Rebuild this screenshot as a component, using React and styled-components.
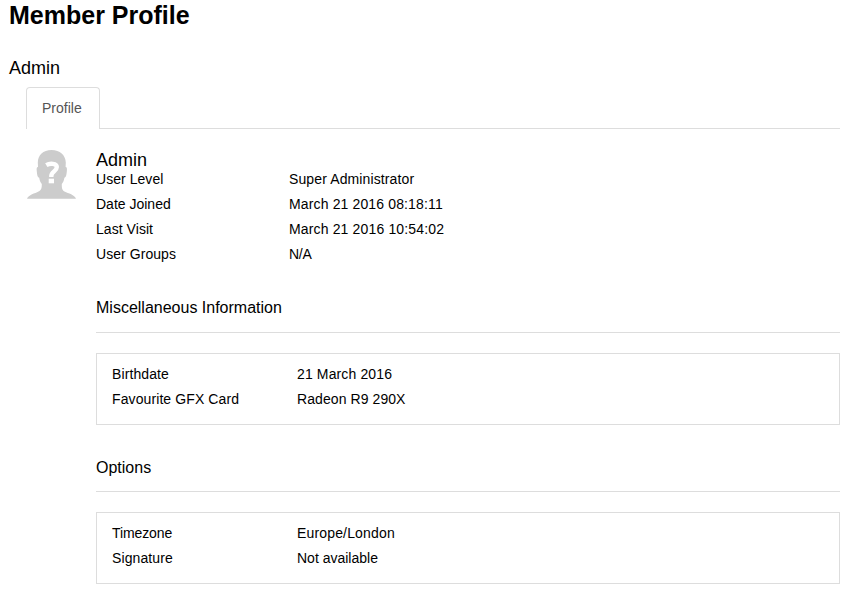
import React from "react";
import styled, { createGlobalStyle } from "styled-components";

const Global = createGlobalStyle`
  * { box-sizing: border-box; }
  body {
    margin: 0;
    background: #fff;
    color: #000;
    font: 14px/25px "Liberation Sans", Arial, sans-serif;
  }
`;

const Page = styled.main`
  height: 599px;
  padding: 0 9px;
  overflow: hidden;
`;

const PageTitle = styled.h1`
  margin: 0;
  height: 53px;
  font-size: 25px;
  line-height: 31px;
`;

const MemberName = styled.h2`
  margin: 0;
  height: 34px;
  font-size: 18px;
  font-weight: 400;
  line-height: 30px;
`;

const TabBar = styled.nav`
  display: flex;
  height: 42px;
  margin-left: 17px;
  border-bottom: 1px solid #ddd;
`;

const Tab = styled.a`
  width: 74px;
  height: 42px;
  padding-left: 15px;
  border: 1px solid #ddd;
  border-bottom: 0;
  border-radius: 4px 4px 0 0;
  background: #fff;
  color: #555;
  line-height: 41px;
`;

const Profile = styled.div`
  display: grid;
  grid-template-columns: 69px 1fr;
  padding: 20px 0 0 18px;
`;

const Avatar = styled.svg`
  display: block;
  width: 50px;
  height: 50px;
`;

const DisplayName = styled.h3`
  margin: 0;
  height: 18px;
  font-size: 18px;
  font-weight: 400;
  line-height: 22px;
`;

const Fields = styled.dl`
  display: grid;
  grid-template-columns: ${(p) => p.$labelWidth}px 1fr;
  grid-auto-rows: 25px;
  margin: 0;
`;

const Label = styled.dt`
  letter-spacing: ${(p) => p.$tracking}px;
`;

const Value = styled.dd`
  margin: 0;
  letter-spacing: ${(p) => p.$tracking}px;
`;

const Section = styled.section`
  margin-top: ${(p) => p.$gap}px;
`;

const SectionTitle = styled.h4`
  margin: 0 0 20px;
  height: ${(p) => p.$height}px;
  border-bottom: 1px solid #ddd;
  font-size: 16px;
  font-weight: 400;
  line-height: 25px;
`;

const Panel = styled.div`
  height: 72px;
  padding: 8px 15px;
  border: 1px solid #ddd;
`;

const account = [
  { label: "User Level", value: "Super Administrator", labelTracking: 0.05, tracking: 0.12 },
  { label: "Date Joined", value: "March 21 2016 08:18:11", tracking: 0.14 },
  { label: "Last Visit", value: "March 21 2016 10:54:02", labelTracking: 0.05, tracking: 0.15 },
  { label: "User Groups", value: "N/A", labelTracking: 0.06, tracking: -0.3 },
];
const misc = [
  { label: "Birthdate", value: "21 March 2016", labelTracking: 0.1, tracking: 0.13 },
  { label: "Favourite GFX Card", value: "Radeon R9 290X", labelTracking: 0.1, tracking: 0.08 },
];
const options = [
  { label: "Timezone", value: "Europe/London", labelTracking: -0.1, tracking: 0.16 },
  { label: "Signature", value: "Not available", labelTracking: 0.1 },
];

function FieldList({ items, labelWidth }) {
  return (
    <Fields $labelWidth={labelWidth}>
      {items.map(({ label, value, labelTracking = 0, tracking = 0 }) => (
        <React.Fragment key={label}>
          <Label $tracking={labelTracking}>{label}</Label>
          <Value $tracking={tracking}>{value}</Value>
        </React.Fragment>
      ))}
    </Fields>
  );
}

function InfoSection({ title, items, gap, titleHeight }) {
  return (
    <Section $gap={gap}>
      <SectionTitle $height={titleHeight}>{title}</SectionTitle>
      <Panel>
        <FieldList items={items} labelWidth={185} />
      </Panel>
    </Section>
  );
}

export default function App() {
  return (
    <>
      <Global />
      <Page>
        <PageTitle>Member Profile</PageTitle>
        <MemberName>Admin</MemberName>
        <TabBar>
          <Tab>Profile</Tab>
        </TabBar>
        <Profile>
          <Avatar viewBox="0 0 50 50" aria-label="No avatar">
            <path
              fill="#ccc"
              d="M24.500 1C16 1 11 6 10.800 13.500L11 18c-1.500 0-1.500 2-1.200 4.500.3 3 .7 6 2.400 6.200.5 3 1.300 4.800 2.600 6.300 0 4-.3 6.200-3.300 7.500C8 44.500 1.500 45.500 0 49.800h49c-1.500-4.300-7.500-5.300-11.500-7.300-2.500-1.300-2.700-3.500-2.700-7.500 1.300-1.500 2.100-3.300 2.600-6.300 1.700-.2 2.100-3.200 2.400-6.200.3-2.500.3-4.500-1.200-4.500l.2-4.500C38.500 6 33 1 24.500 1z"
            />
            <path
              fill="none"
              stroke="#fff"
              strokeWidth="4.400"
              d="M19.300 16.200c3.500-2.200 10.500-2 10.500 1.900 0 4.200-5.500 4.400-5.500 8.900v1"
            />
            <path fill="#fff" d="M21.700 29.700h5.300v4.600h-5.300z" />
          </Avatar>
          <div>
            <DisplayName>Admin</DisplayName>
            <FieldList items={account} labelWidth={193} />
            <InfoSection title="Miscellaneous Information" items={misc} gap={28} titleHeight={38} />
            <InfoSection title="Options" items={options} gap={30} titleHeight={37} />
          </div>
        </Profile>
      </Page>
    </>
  );
}
